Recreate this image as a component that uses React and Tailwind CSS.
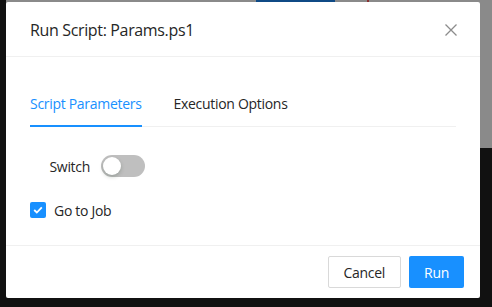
import React from "react";

export default function App() {
  const font = { fontFamily: '"Open Sans", "Noto Sans", sans-serif' };
  return (
    <div className="relative w-[492px] h-[307px] overflow-hidden bg-[#111111]" style={font}>
      {/* dimmed page behind */}
      <div className="absolute left-[6px] top-0 w-[486px] h-[148px] bg-[#8a8a8a]" />
      <div className="absolute left-[256px] top-0 w-[79px] h-[2px] bg-[#0f4a85]" />
      <div className="absolute left-[367px] top-0 w-[2px] h-[2px] bg-[#8a3030]" />

      {/* modal */}
      <div className="absolute left-[6px] top-[2px] w-[474px] h-[296px] bg-white rounded-[2px] flex flex-col">
        <div className="h-[55px] border-b border-[#f0f0f0] flex items-center justify-between pl-[24px] pr-[22px]">
          <div className="text-[16px] leading-[22px] tracking-[-0.35px] text-[#262626] pt-[1px]">Run Script: Params.ps1</div>
          <svg width="14" height="14" viewBox="0 0 14 14" className="mt-[1px]">
            <path d="M1.5 1.5 L12.5 12.5 M12.5 1.5 L1.5 12.5" stroke="#8c8c8c" strokeWidth="1.3" fill="none" />
          </svg>
        </div>
        <div className="px-[24px] pt-[24px] pb-[24px] border-b border-[#f0f0f0] text-[14px] tracking-[-0.3px]">
          <div className="flex gap-[32px] border-b border-[#f0f0f0] h-[46px]">
            <div className="relative flex items-center text-[#1890ff]">
              Script Parameters
              <div className="absolute left-0 right-0 bottom-[-1px] h-[2px] bg-[#1890ff]" />
            </div>
            <div className="flex items-center text-[#262626]">Execution Options</div>
          </div>
          <div className="mt-[23px] h-[32px] flex items-center">
            <div className="w-[60px] text-right text-[#262626]">Switch</div>
            <div className="ml-[11px] w-[44px] h-[22px] rounded-full bg-[#bfbfbf] relative">
              <div className="absolute left-[2px] top-[2px] w-[18px] h-[18px] rounded-full bg-white shadow-[0_2px_4px_rgba(0,35,11,0.2)]" />
            </div>
          </div>
          <div className="mt-[17px] h-[22px] flex items-center">
            <div className="w-[16px] h-[16px] rounded-[2px] bg-[#1890ff] flex items-center justify-center">
              <svg width="10" height="8" viewBox="0 0 10 8">
                <path d="M1.2 4 L3.8 6.5 L8.8 1.3" stroke="white" strokeWidth="1.8" fill="none" />
              </svg>
            </div>
            <div className="ml-[8px] text-[#262626]">Go to Job</div>
          </div>
        </div>
        <div className="flex-1 flex items-center justify-end gap-[8px] pr-[16px] text-[14px] tracking-[-0.3px]">
          <div className="h-[32px] px-[15px] flex items-center border border-[#d9d9d9] rounded-[2px] text-[#262626]">Cancel</div>
          <div className="h-[32px] px-[15px] flex items-center bg-[#1890ff] rounded-[2px] text-white">Run</div>
        </div>
      </div>
    </div>
  );
}
